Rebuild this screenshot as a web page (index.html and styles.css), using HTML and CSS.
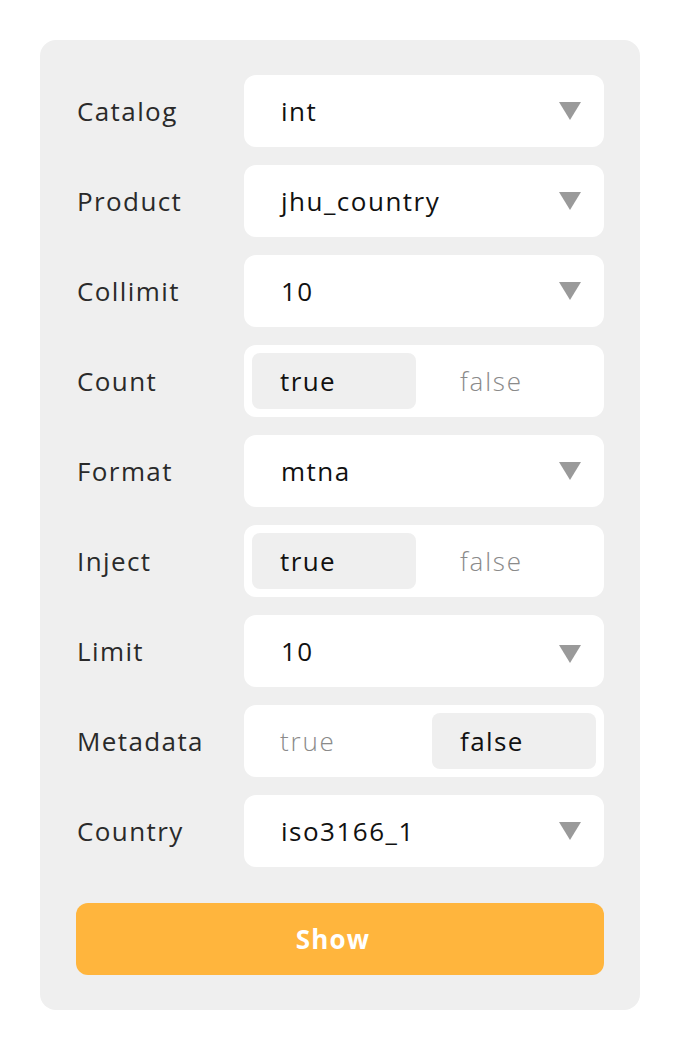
FILE: index.html
```html
<!DOCTYPE html>
<html>
<head>
<meta charset="utf-8">
<link rel="stylesheet" href="styles.css">
</head>
<body>
<div class="panel">
  <div class="row"><div class="label">Catalog</div><div class="field select"><span class="val">int</span><span class="arrow"></span></div></div>
  <div class="row"><div class="label">Product</div><div class="field select"><span class="val">jhu_country</span><span class="arrow"></span></div></div>
  <div class="row"><div class="label">Collimit</div><div class="field select"><span class="val">10</span><span class="arrow"></span></div></div>
  <div class="row"><div class="label">Count</div><div class="field seg"><div class="opt on">true</div><div class="opt">false</div></div></div>
  <div class="row"><div class="label">Format</div><div class="field select"><span class="val">mtna</span><span class="arrow"></span></div></div>
  <div class="row"><div class="label">Inject</div><div class="field seg"><div class="opt on">true</div><div class="opt">false</div></div></div>
  <div class="row"><div class="label">Limit</div><div class="field select"><span class="val">10</span><span class="arrow low"></span></div></div>
  <div class="row"><div class="label">Metadata</div><div class="field seg"><div class="opt">true</div><div class="opt on">false</div></div></div>
  <div class="row"><div class="label">Country</div><div class="field select"><span class="val">iso3166_1</span><span class="arrow"></span></div></div>
  <button class="show">Show</button>
</div>
</body>
</html>
```
FILE: styles.css
```css
html, body { margin: 0; padding: 0; background: #fff; }
body { padding: 40px; font-family: "Open Sans", "Noto Sans", sans-serif; }
.panel {
  width: 600px;
  box-sizing: border-box;
  background: #efefef;
  border-radius: 16px;
  padding: 35px 36px 35px 36px;
  display: flex;
  flex-direction: column;
  gap: 18px;
}
.row { display: flex; align-items: center; height: 72px; }
.label {
  width: 168px;
  padding-left: 1px;
  box-sizing: border-box;
  font-size: 26px;
  color: #2a2a2a;
  letter-spacing: 1.4px;
}
.field {
  width: 360px;
  height: 72px;
  background: #fff;
  border-radius: 12px;
  box-sizing: border-box;
}
.select {
  display: flex;
  align-items: center;
  justify-content: space-between;
  padding: 0 23px 0 37px;
}
.val { font-size: 26px; font-weight: 500; color: #111; letter-spacing: 1.5px; }
.arrow {
  width: 0; height: 0;
  border-left: 11px solid transparent;
  border-right: 11px solid transparent;
  border-top: 18px solid #9a9a9a;
}
.arrow.low { margin-top: 6px; }
.seg { display: flex; padding: 8px; gap: 16px; }
.opt {
  flex: 1;
  border-radius: 8px;
  display: flex;
  align-items: center;
  padding-left: 28px;
  font-size: 26px;
  font-weight: 300;
  color: #8a8a8a;
  letter-spacing: 1.8px;
}
.opt.on { background: #efefef; color: #111; font-weight: 500; letter-spacing: 1.4px; }
.show {
  margin-top: 18px;
  height: 72px;
  border: none;
  border-radius: 12px;
  background: #ffb53d;
  color: #fff;
  font-family: inherit;
  font-size: 26px;
  font-weight: 700;
  letter-spacing: 1.2px;
  padding: 0 14px 0 0;
}
```
